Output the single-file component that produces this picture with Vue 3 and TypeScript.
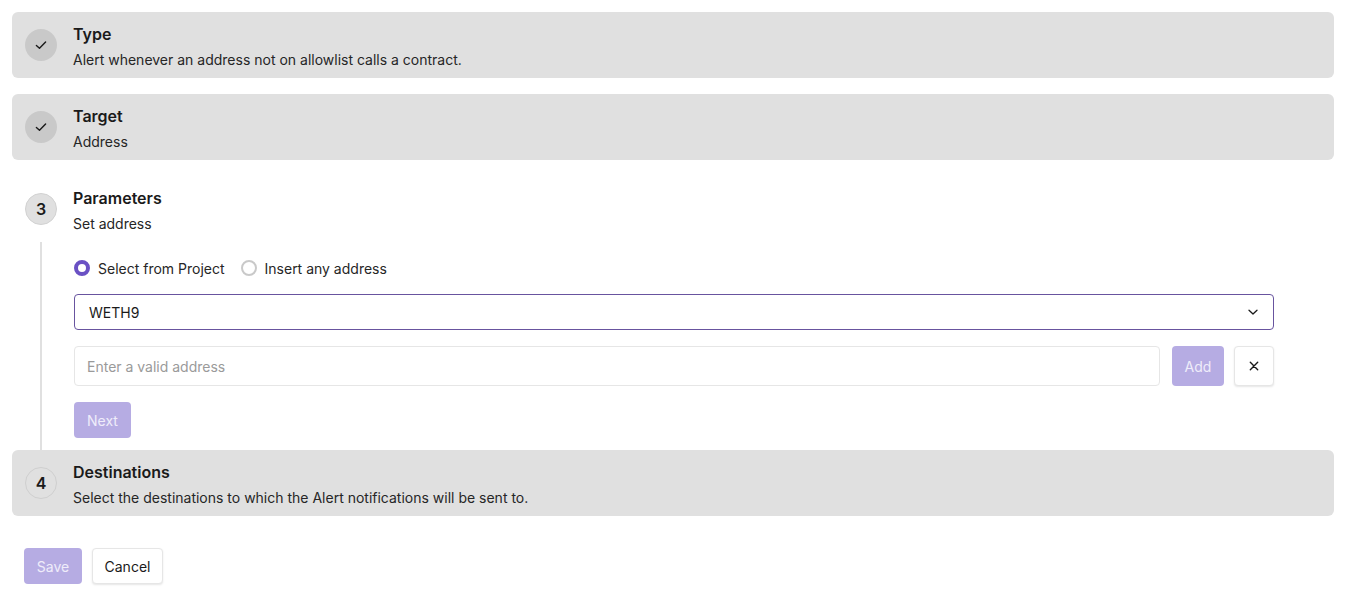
<script setup lang="ts">
interface Step {
  id: number;
  title: string;
  sub: string;
  done: boolean;
}
const before: Step[] = [
  { id: 1, title: "Type", sub: "Alert whenever an address not on allowlist calls a contract.", done: true },
  { id: 2, title: "Target", sub: "Address", done: true },
];
</script>

<template>
  <main class="page">
    <section v-for="s in before" :key="s.id" class="step muted">
      <span class="circle done">
        <svg width="16" height="16" viewBox="0 0 16 16" fill="none" stroke="#1a1a1a" stroke-width="1.4" stroke-linecap="round" stroke-linejoin="round">
          <path d="M3.4 8.4 6.5 11.3 12.6 4.9" />
        </svg>
      </span>
      <div class="text">
        <h3>{{ s.title }}</h3>
        <p>{{ s.sub }}</p>
      </div>
    </section>

    <section class="step">
      <span class="circle current">3</span>
      <div class="text">
        <h3>Parameters</h3>
        <p>Set address</p>
      </div>
    </section>

    <div class="body">
      <div class="radios">
        <label class="radio"><span class="dot on"></span>Select from Project</label>
        <label class="radio"><span class="dot"></span>Insert any address</label>
      </div>
      <div class="select">
        <span>WETH9</span>
        <svg width="12" height="12" viewBox="0 0 12 12" fill="none" stroke="#1a1a1a" stroke-width="1.3" stroke-linecap="round" stroke-linejoin="round">
          <path d="M2 4.2 6 8 10 4.2" />
        </svg>
      </div>
      <div class="add-row">
        <input class="input" type="text" placeholder="Enter a valid address" />
        <button class="btn primary add" type="button">Add</button>
        <button class="btn plain close" type="button" aria-label="Remove">
          <svg width="16" height="16" viewBox="0 0 16 16" fill="none" stroke="#1a1a1a" stroke-width="1.4" stroke-linecap="round">
            <path d="M4.3 4.3 11.7 11.7M11.7 4.3 4.3 11.7" />
          </svg>
        </button>
      </div>
      <button class="btn primary next" type="button">Next</button>
    </div>

    <section class="step muted">
      <span class="circle outline">4</span>
      <div class="text">
        <h3>Destinations</h3>
        <p>Select the destinations to which the Alert notifications will be sent to.</p>
      </div>
    </section>

    <footer class="actions">
      <button class="btn primary save" type="button">Save</button>
      <button class="btn plain cancel" type="button">Cancel</button>
    </footer>
  </main>
</template>

<style scoped>
.page {
  box-sizing: border-box;
  width: 1346px;
  height: 596px;
  padding: 12px 12px 0;
  display: flex;
  flex-direction: column;
  font-family: Inter, "Liberation Sans", sans-serif;
  color: #1a1a1a;
  background: #fff;
  overflow: hidden;
}
.step {
  display: flex;
  align-items: center;
  gap: 16px;
  height: 66px;
  flex: none;
  box-sizing: border-box;
  padding: 0 13px;
  border-radius: 6px;
  margin-bottom: 16px;
}
.step.muted {
  background: #e0e0e0;
}
.step:nth-of-type(3) {
  margin-bottom: 0;
}
.circle {
  width: 32px;
  height: 32px;
  flex: none;
  border-radius: 50%;
  box-sizing: border-box;
  display: flex;
  align-items: center;
  justify-content: center;
  font-size: 16px;
  font-weight: 600;
}
.circle.done {
  background: #c9c9c9;
}
.circle.current {
  background: #e0e0e0;
  border: 1px solid #d2d2d2;
}
.circle.outline {
  border: 1px solid #cfcfcf;
}
.text {
  margin-top: 1px;
}
h3 {
  margin: 0;
  font-size: 16px;
  line-height: 24px;
  font-weight: 600;
}
p {
  margin: 4px 0 0;
  font-size: 14px;
  line-height: 20px;
  font-weight: 400;
  color: #262626;
}
.body {
  margin-left: 28px;
  border-left: 2px solid #e0e0e0;
  box-sizing: border-box;
  height: 208px;
  flex: none;
  padding: 16px 0 0 32px;
  width: 1234px;
}
.radios {
  display: flex;
  gap: 16px;
  height: 20px;
}
.radio {
  display: flex;
  align-items: center;
  gap: 8px;
  font-size: 14px;
  color: #262626;
}
.dot {
  width: 16px;
  height: 16px;
  box-sizing: border-box;
  border-radius: 50%;
  border: 2px solid #c9c9c9;
  background: #fff;
}
.dot.on {
  border: 4px solid #6a51c4;
}
.select {
  margin-top: 16px;
  height: 36px;
  box-sizing: border-box;
  border: 1px solid #68549f;
  border-radius: 4px;
  padding: 0 14px;
  display: flex;
  align-items: center;
  justify-content: space-between;
  font-size: 14px;
}
.add-row {
  margin-top: 16px;
  display: flex;
  height: 40px;
}
.input {
  flex: 1;
  min-width: 0;
  box-sizing: border-box;
  height: 40px;
  border: 1px solid #e6e6e6;
  border-radius: 4px;
  padding: 0 12px;
  font: 400 14px Inter, "Liberation Sans", sans-serif;
  color: #1a1a1a;
  outline: none;
  margin-right: 12px;
}
.input::placeholder {
  color: #9a9a9a;
  opacity: 1;
}
.btn {
  box-sizing: border-box;
  border-radius: 4px;
  font: 400 14px Inter, "Liberation Sans", sans-serif;
  display: flex;
  align-items: center;
  justify-content: center;
  padding: 0;
  cursor: pointer;
}
.primary {
  background: #b6ace3;
  color: #efecfa;
  border: none;
}
.plain {
  background: #fff;
  color: #1a1a1a;
  border: 1px solid #e6e6e6;
  box-shadow: 0 1px 2px rgba(0, 0, 0, 0.1);
}
.add {
  width: 52px;
  height: 40px;
  margin-right: 10px;
}
.close {
  width: 40px;
  height: 40px;
}
.next {
  margin-top: 16px;
  width: 57px;
  height: 36px;
}
.actions {
  margin-top: 16px;
  padding-left: 12px;
  display: flex;
  gap: 10px;
}
.save {
  width: 58px;
  height: 36px;
}
.cancel {
  width: 71px;
  height: 36px;
}
</style>
